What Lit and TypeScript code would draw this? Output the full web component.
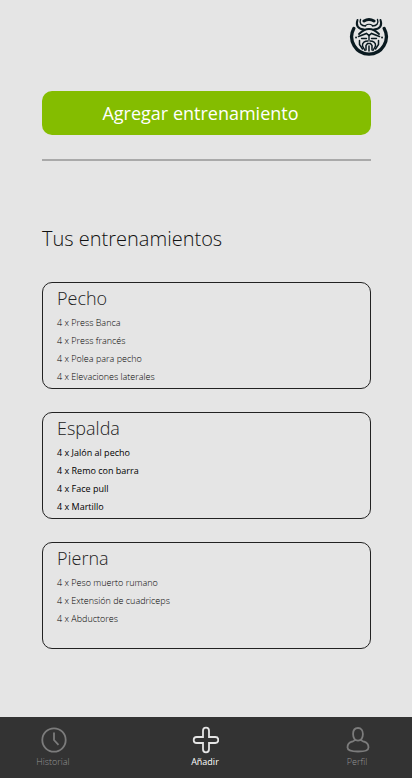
import { LitElement, html, css, svg } from "lit";
import { customElement, property } from "lit/decorators.js";

interface Workout {
  name: string;
  exercises: string[];
  strong?: boolean;
}

const workouts: Workout[] = [
  { name: "Pecho", exercises: ["Press Banca", "Press francés", "Polea para pecho", "Elevaciones laterales"] },
  { name: "Espalda", exercises: ["Jalón al pecho", "Remo con barra", "Face pull", "Martillo"], strong: true },
  { name: "Pierna", exercises: ["Peso muerto rumano", "Extensión de cuadriceps", "Abductores"] },
];

const clockIcon = svg`<circle cx="14" cy="14" r="11.700"/><path d="M14 6.500V14l4.500 4.800"/>`;
const plusIcon = svg`<path d="M11 11V4.700a3 3 0 0 1 6 0V11h6.300a3 3 0 0 1 0 6H17v6.300a3 3 0 0 1-6 0V17H4.700a3 3 0 0 1 0-6Z"/>`;
const personIcon = svg`<path d="M14 2c-3.200 0-4.900 2.500-4.900 6 0 3.600 1.700 6.600 4.900 6.600s4.900-3 4.900-6.600c0-3.500-1.700-6-4.900-6ZM10.800 14c-.8 1.200-1.800 1.300-3 1.700-3 1-4.300 2.800-4.300 5.800 0 2.600 2.500 4 10.500 4s10.500-1.400 10.500-4c0-3-1.300-4.800-4.300-5.800-1.200-.4-2.200-.5-3-1.700"/>`;

@customElement("workout-card")
export class WorkoutCard extends LitElement {
  @property({ attribute: false }) workout!: Workout;

  static styles = css`
    :host { display: block; }
    .card {
      box-sizing: border-box;
      min-height: 107px;
      padding: 0 14px 2px;
      border: 1px solid #222;
      border-radius: 10px;
    }
    .name { margin: 0; font-size: 18px; line-height: 31px; font-weight: 300; color: #222; }
    .list { margin: 0; padding: 0; list-style: none; font-size: 9px; line-height: 18px; font-weight: 300; color: #000; }
    .strong { font-weight: 400; }
  `;

  render() {
    const { name, exercises, strong } = this.workout;
    return html`<article class="card">
      <h3 class="name">${name}</h3>
      <ul class="list ${strong ? "strong" : ""}">
        ${exercises.map((e) => html`<li>4 x ${e}</li>`)}
      </ul>
    </article>`;
  }
}

@customElement("app-root")
export class AppRoot extends LitElement {
  static styles = css`
    :host {
      display: flex;
      flex-direction: column;
      min-height: 100vh;
      background: #e5e5e5;
      color: #111;
      font-family: "Open Sans", "Noto Sans", sans-serif;
    }
    .header { display: flex; justify-content: flex-end; padding: 17px 23px 0 0; }
    .logo { display: block; width: 40px; height: 40px; }
    .main { flex: 1; padding: 34px 41px 24px 42px; }
    .add {
      display: block;
      width: 100%;
      height: 44px;
      padding: 0 12px 0 0;
      border: 0;
      border-radius: 10px;
      background: #84bd00;
      color: #fff;
      font: inherit;
      font-size: 18px;
      cursor: pointer;
    }
    .rule { height: 2px; margin: 24px 0 0; border: 0; background: #a9a9a9; }
    .title { margin: 62px 0 28px; font-size: 20px; line-height: 31px; font-weight: 300; }
    .cards { display: grid; gap: 23px; }
    .nav {
      box-sizing: border-box;
      display: flex;
      justify-content: space-between;
      min-height: 61px;
      padding: 9px 37px 8px 35px;
      background: #333;
    }
    .item {
      display: flex;
      flex-direction: column;
      align-items: center;
      width: 36px;
      color: #959595;
      font-size: 9px;
      line-height: 16px;
      font-weight: 300;
      text-decoration: none;
    }
    .current { color: #fff; font-weight: 400; }
    .icon { width: 28px; height: 28px; fill: none; stroke: #7c7c7c; stroke-width: 1.8; }
    .current .icon { stroke: #e5e5e5; }
  `;

  private item(label: string, icon: unknown, current = false) {
    return html`<a class="item ${current ? "current" : ""}" href="#">
      <svg class="icon" viewBox="-1 0 28 28" aria-hidden="true">${icon}</svg>
      <span>${label}</span>
    </a>`;
  }

  render() {
    return html`
      <header class="header">
        <svg class="logo" viewBox="0 0 40 40" role="img" aria-label="Logo" fill="none" stroke="#0a1a20" stroke-linecap="round">
          <path d="M4.800 11.500A17.300 17.300 0 1 0 35.200 11.500" stroke-width="3.300"/>
          <path d="M8.500 3C6.500 8.500 9 12 15 12.500M31.500 3C33.500 8.500 31 12 25 12.500" stroke-width="2"/>
          <path d="M11.500 2.500c-1.500 4 1 6.500 5 6.500M28.500 2.500c1.500 4-1 6.500-5 6.500" stroke-width="1.400"/>
          <path d="M15 4Q20 1 25 4" stroke-width="3"/>
          <path d="M16.500 8.500Q20 6 23.500 8.500" stroke-width="1.200"/>
          <path d="M10 17Q15 12 20 12t10 5" stroke-width="1.800"/>
          <path d="M9.500 19.500l8-3L20 18.500l2.500-2 8 3" stroke-width="1.600"/>
          <path d="M12.500 21.500h5M22.500 21.500h5M20 18.500v4.500" stroke-width="1.400"/>
          <path d="M10.500 23.500v4l3 4.500M29.500 23.500v4l-3 4.500" stroke-width="1.500"/>
          <path d="M19 24c-3 0-6 1.500-5.500 5l2.500 4.500M21 24c3 0 6 1.500 5.500 5L24 33.500" stroke-width="1.500"/>
          <path d="M17 33v-4.500l1.500-2h3l1.500 2V33" stroke-width="1.500"/>
          <path d="M20 29v5" stroke-width="1.500"/>
          <path d="M7 20.500h.1M33 20.500h.1" stroke-width="1.800"/>
        </svg>
      </header>
      <main class="main">
        <button class="add" type="button">Agregar entrenamiento</button>
        <hr class="rule" />
        <h2 class="title">Tus entrenamientos</h2>
        <div class="cards">
          ${workouts.map((w) => html`<workout-card .workout=${w}></workout-card>`)}
        </div>
      </main>
      <nav class="nav">
        ${this.item("Historial", clockIcon)}
        ${this.item("Añadir", plusIcon, true)}
        ${this.item("Perfil", personIcon)}
      </nav>
    `;
  }
}
